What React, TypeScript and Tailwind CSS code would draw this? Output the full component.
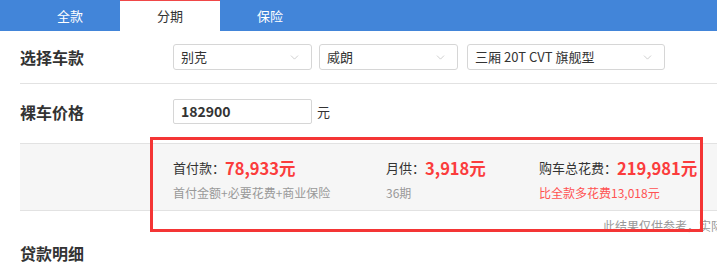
import { ChevronDown } from 'lucide-react';

const FONT = { fontFamily: '"Noto Sans CJK SC", "Noto Sans", sans-serif' };

function Select({ value, width }: { value: string; width: string }) {
  return (
    <div className={`flex h-[26px] items-center justify-between rounded-[3px] border border-[#d6d6d6] bg-white pl-[7px] pr-[10px] text-[13px] text-[#333] ${width}`}>
      <span>{value}</span>
      <ChevronDown size={13} strokeWidth={1.1} className="text-[#b0b0b0]" />
    </div>
  );
}

function Stat({ label, value, sub, subRed, width }: { label: string; value: string; sub: string; subRed?: boolean; width: string }) {
  return (
    <div className={`flex flex-col ${width}`}>
      <div className="flex h-[22px] items-center text-[13px] text-[#333]">
        {label}：<span className="text-[16.5px] font-bold text-[#fb3c3c]">{value}</span>
      </div>
      <div className={`mt-[5px] text-[12px] leading-[18px] ${subRed ? 'text-[#ff5252]' : 'text-[#999]'}`}>{sub}</div>
    </div>
  );
}

export default function App() {
  return (
    <div className="relative h-[270px] w-[717px] overflow-hidden bg-white" style={FONT}>
      <div className="flex h-[31px] bg-[#4285d9] pl-[20px] text-[13px]">
        <div className="flex w-[100px] items-center justify-center text-white">全款</div>
        <div className="flex w-[100px] items-center justify-center border-t border-[#f04848] bg-white text-[#333]">分期</div>
        <div className="flex w-[100px] items-center justify-center text-white">保险</div>
      </div>

      <div className="pl-[20px]">
        <div className="flex h-[53px] items-center border-b border-[#e2e2e2]">
          <div className="w-[153px] text-[16px] font-bold text-[#333]">选择车款</div>
          <div className="flex gap-[7px]">
            <Select value="别克" width="w-[139px]" />
            <Select value="威朗" width="w-[139px]" />
            <div className="ml-[2px]">
              <Select value="三厢 20T CVT 旗舰型" width="w-[198px]" />
            </div>
          </div>
        </div>

        <div className="flex h-[59px] items-start pt-[15px]">
          <div className="flex h-[25px] w-[153px] items-center text-[16px] font-bold text-[#333]">裸车价格</div>
          <div className="flex h-[25px] w-[139px] items-center rounded-[2px] border border-[#d6d6d6] px-[7px] text-[14px] font-bold text-[#333]">182900</div>
          <span className="ml-[5px] flex h-[25px] items-center text-[13px] text-[#333]">元</span>
        </div>

        <div className="flex h-[68px] items-start border-y border-[#e2e2e2] bg-[#f6f6f6] pl-[153px] pt-[13px]">
          <Stat label="首付款" value="78,933元" sub="首付金额+必要花费+商业保险" width="w-[213px]" />
          <Stat label="月供" value="3,918元" sub="36期" width="w-[153px]" />
          <Stat label="购车总花费" value="219,981元" sub="比全款多花费13,018元" subRed width="w-[170px]" />
        </div>

        <p className="ml-[583px] mt-[6px] whitespace-nowrap text-[12px] leading-[18px] text-[#999]">此结果仅供参考，实际费用以当地为准</p>

        <div className="mt-[8px] text-[16px] font-bold leading-[20px] text-[#333]">贷款明细</div>
      </div>

      <div className="pointer-events-none absolute left-[150px] top-[137px] h-[95px] w-[553px] border-[3px] border-[#f43535]" />
    </div>
  );
}
